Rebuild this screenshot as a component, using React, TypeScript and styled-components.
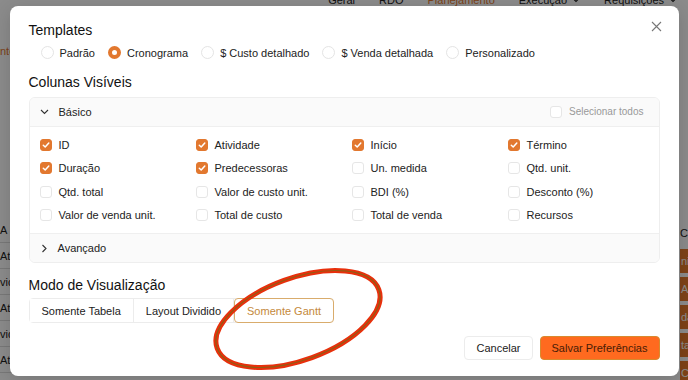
import { createGlobalStyle, styled } from 'styled-components'

const GlobalStyle = createGlobalStyle`
	html, body {
		margin: 0;
		padding: 0;
		background: #ffffff;
	}
	body {
		font-family: 'Liberation Sans', Arial, sans-serif;
		-webkit-font-smoothing: antialiased;
	}
	* {
		box-sizing: border-box;
	}
`

const ORANGE = '#e2782f'

const templates = [
	{ label: 'Padrão', checked: false },
	{ label: 'Cronograma', checked: true },
	{ label: '$ Custo detalhado', checked: false },
	{ label: '$ Venda detalhada', checked: false },
	{ label: 'Personalizado', checked: false },
]

const columns = [
	{ label: 'ID', checked: true },
	{ label: 'Atividade', checked: true },
	{ label: 'Início', checked: true },
	{ label: 'Término', checked: true },
	{ label: 'Duração', checked: true },
	{ label: 'Predecessoras', checked: true },
	{ label: 'Un. medida', checked: false },
	{ label: 'Qtd. unit.', checked: false },
	{ label: 'Qtd. total', checked: false },
	{ label: 'Valor de custo unit.', checked: false },
	{ label: 'BDI (%)', checked: false },
	{ label: 'Desconto (%)', checked: false },
	{ label: 'Valor de venda unit.', checked: false },
	{ label: 'Total de custo', checked: false },
	{ label: 'Total de venda', checked: false },
	{ label: 'Recursos', checked: false },
]

const modes = [
	{ label: 'Somente Tabela', active: false },
	{ label: 'Layout Dividido', active: false },
	{ label: 'Somente Gantt', active: true },
]

const navItems = [
	{ label: 'Geral', current: false, menu: false },
	{ label: 'RDO', current: false, menu: false },
	{ label: 'Planejamento', current: true, menu: false },
	{ label: 'Execução', current: false, menu: true },
	{ label: 'Requisições', current: false, menu: true },
]

const taskRows = ['A', 'Atividade', 'vidade', 'Atividade', 'vidade', 'Atividade']
const ganttRows = ['Cr', 'nicio', 'Ativ', 'dade', 'tarefa', 'Cron']

function Chevron({ dir }: { dir: 'down' | 'right' | 'small' }) {
	if (dir === 'right') {
		return (
			<svg width="8" height="9" viewBox="0 0 8 9" fill="none">
				<polyline points="2.5,1 6,4.5 2.5,8" stroke="#333" strokeWidth="1.1" />
			</svg>
		)
	}
	if (dir === 'small') {
		return (
			<svg width="8" height="6" viewBox="0 0 8 6" fill="none">
				<polyline points="1,1.5 4,4.5 7,1.5" stroke="#222" strokeWidth="1.1" />
			</svg>
		)
	}
	return (
		<svg width="9" height="8" viewBox="0 0 9 8" fill="none">
			<polyline points="1,2 4.5,5.5 8,2" stroke="#333" strokeWidth="1.1" />
		</svg>
	)
}

function Check({ checked }: { checked: boolean }) {
	return (
		<Box $checked={checked}>
			{checked && (
				<svg width="8" height="8" viewBox="0 0 8 8" fill="none">
					<polyline
						points="1.3,4.2 3.2,6 6.8,2"
						stroke="#fff"
						strokeWidth="1.5"
						strokeLinecap="round"
						strokeLinejoin="round"
					/>
				</svg>
			)}
		</Box>
	)
}

function App() {
	return (
		<Page>
			<GlobalStyle />
			<Nav>
				{navItems.map((item) => (
					<NavItem key={item.label} $current={item.current}>
						{item.label}
						{item.menu && <Chevron dir="small" />}
					</NavItem>
				))}
			</Nav>
			<Toolbar>
				<ToolbarTab>nte</ToolbarTab>
			</Toolbar>
			<Workspace>
				<TaskList>
					{taskRows.map((t, i) => (
						<TaskRow key={i}>{t}</TaskRow>
					))}
				</TaskList>
				<GanttList>
					{ganttRows.map((t, i) => (
						<GanttRow key={i}>
							{i > 0 ? <GanttBar>{t}</GanttBar> : <GanttHead>{t}</GanttHead>}
						</GanttRow>
					))}
				</GanttList>
			</Workspace>

			<Overlay>
				<Modal>
					<TitleRow>
						<Heading>Templates</Heading>
						<CloseButton aria-label="Fechar">
							<svg width="11" height="11" viewBox="0 0 11 11" fill="none">
								<path d="M1 1 L10 10 M10 1 L1 10" stroke="#777" strokeWidth="1.1" />
							</svg>
						</CloseButton>
					</TitleRow>
					<RadioRow>
						{templates.map((t) => (
							<RadioItem key={t.label}>
								<Radio $checked={t.checked} />
								{t.label}
							</RadioItem>
						))}
					</RadioRow>

					<SectionHeading>Colunas Visíveis</SectionHeading>
					<Accordion>
						<AccordionHeader>
							<HeaderLabel>
								<Chevron dir="down" />
								Básico
							</HeaderLabel>
							<SelectAll>
								<Check checked={false} />
								Selecionar todos
							</SelectAll>
						</AccordionHeader>
						<ColumnGrid>
							{columns.map((c) => (
								<ColumnItem key={c.label}>
									<Check checked={c.checked} />
									{c.label}
								</ColumnItem>
							))}
						</ColumnGrid>
						<AccordionFooter>
							<HeaderLabel>
								<Chevron dir="right" />
								Avançado
							</HeaderLabel>
						</AccordionFooter>
					</Accordion>

					<SectionHeading>Modo de Visualização</SectionHeading>
					<Segmented>
						{modes.map((m) => (
							<Segment key={m.label} $active={m.active}>
								{m.label}
							</Segment>
						))}
					</Segmented>

					<Footer>
						<SecondaryButton>Cancelar</SecondaryButton>
						<PrimaryButton>Salvar Preferências</PrimaryButton>
					</Footer>
				</Modal>
			</Overlay>

			<Annotation width="688" height="380" viewBox="0 0 688 380">
				<ellipse
					cx="298"
					cy="319"
					rx="86"
					ry="41"
					transform="rotate(-20 298 319)"
					fill="none"
					stroke="#e8300c"
					strokeWidth="5"
				/>
				<ellipse
					cx="298"
					cy="319"
					rx="86"
					ry="41"
					transform="rotate(-20 298 319)"
					fill="none"
					stroke="#8f5e14"
					strokeWidth="1.2"
				/>
			</Annotation>
		</Page>
	)
}

export default App

const Page = styled.div`
	position: relative;
	width: 688px;
	height: 380px;
	overflow: hidden;
	background: #ffffff;
`
const Nav = styled.nav`
	display: flex;
	justify-content: flex-end;
	align-items: center;
	gap: 24px;
	height: 14px;
	margin-top: -7px;
	padding-right: 11px;
`
const NavItem = styled.span<{ $current: boolean }>`
	display: flex;
	align-items: center;
	gap: 5px;
	font-size: 11px;
	line-height: 14px;
	color: ${(p) => (p.$current ? ORANGE : '#222')};
`
const Toolbar = styled.div`
	display: flex;
	height: 40px;
	align-items: flex-end;
	padding-bottom: 4px;
	margin-top: 14px;
`
const ToolbarTab = styled.span`
	font-size: 11px;
	color: ${ORANGE};
`
const Workspace = styled.div`
	display: flex;
	justify-content: space-between;
	margin-top: 156px;
`
const TaskList = styled.div`
	display: flex;
	flex-direction: column;
	width: 200px;
`
const TaskRow = styled.div`
	height: 26px;
	display: flex;
	align-items: center;
	font-size: 11px;
	color: #222;
	border-bottom: 1px solid #ddd;
`
const GanttList = styled.div`
	display: flex;
	flex-direction: column;
	width: 8px;
	padding-top: 2px;
`
const GanttRow = styled.div`
	height: 28px;
	display: flex;
	align-items: center;
`
const GanttHead = styled.span`
	font-size: 11px;
	color: #222;
`
const GanttBar = styled.div`
	width: 60px;
	height: 24px;
	display: flex;
	align-items: center;
	background: #e8792b;
	color: #fff;
	font-size: 11px;
	padding-left: 1px;
	flex-shrink: 0;
`
const Overlay = styled.div`
	position: absolute;
	inset: 0;
	display: flex;
	justify-content: center;
	align-items: flex-start;
	padding-top: 6px;
	background: rgba(0, 0, 0, 0.455);
`
const Modal = styled.div`
	width: 669px;
	height: 370px;
	display: flex;
	flex-direction: column;
	padding: 15px 19px 16px;
	background: #ffffff;
	border-radius: 8px;
	box-shadow: 0 4px 18px rgba(0, 0, 0, 0.15);
`
const TitleRow = styled.div`
	display: flex;
	justify-content: space-between;
	align-items: center;
`
const Heading = styled.h2`
	margin: 0;
	font-size: 14px;
	line-height: 18px;
	font-weight: 400;
	color: #111;
`
const SectionHeading = styled(Heading)`
	margin-top: 13px;
`
const CloseButton = styled.button`
	display: flex;
	align-items: center;
	justify-content: center;
	width: 14px;
	height: 14px;
	padding: 0;
	margin: -8px -4px 0 0;
	border: none;
	background: none;
	cursor: pointer;
`
const RadioRow = styled.div`
	display: flex;
	align-items: center;
	gap: 13px;
	height: 14px;
	margin-top: 7px;
	padding-left: 12px;
`
const RadioItem = styled.label`
	display: flex;
	align-items: center;
	gap: 6px;
	font-size: 11px;
	color: #222;
`
const Radio = styled.span<{ $checked: boolean }>`
	width: 13px;
	height: 13px;
	border-radius: 50%;
	background: #fff;
	border: ${(p) => (p.$checked ? `4px solid ${ORANGE}` : '1px solid #e4e4e4')};
`
const Accordion = styled.div`
	margin-top: 6px;
	border: 1px solid #eeeeee;
	border-radius: 6px;
	overflow: hidden;
`
const AccordionHeader = styled.div`
	height: 29px;
	display: flex;
	justify-content: space-between;
	align-items: center;
	padding: 0 15px 0 10px;
	background: #fafafa;
	border-bottom: 1px solid #efefef;
`
const AccordionFooter = styled(AccordionHeader)`
	height: 30px;
	border-bottom: none;
	border-top: 1px solid #efefef;
`
const HeaderLabel = styled.div`
	display: flex;
	align-items: center;
	gap: 10px;
	font-size: 11px;
	color: #222;
`
const SelectAll = styled.label`
	display: flex;
	align-items: center;
	gap: 7px;
	font-size: 10px;
	color: #999;
`
const ColumnGrid = styled.div`
	display: grid;
	grid-template-columns: repeat(4, 156px);
	grid-auto-rows: 23.5px;
	padding: 6px 0 6px 10px;
`
const ColumnItem = styled.label`
	display: flex;
	align-items: center;
	gap: 7px;
	font-size: 11px;
	color: #222;
`
const Box = styled.span<{ $checked: boolean }>`
	width: 12px;
	height: 12px;
	display: flex;
	align-items: center;
	justify-content: center;
	border-radius: 3px;
	background: ${(p) => (p.$checked ? ORANGE : '#fff')};
	border: 1px solid ${(p) => (p.$checked ? ORANGE : '#e6e6e6')};
`
const Segmented = styled.div`
	display: inline-flex;
	align-self: flex-start;
	height: 25px;
	margin-top: 4px;
	border: 1px solid #ececec;
	border-radius: 4px;
`
const Segment = styled.button<{ $active: boolean }>`
	padding: 0 12px;
	font-family: inherit;
	font-size: 11px;
	background: #fff;
	cursor: pointer;
	color: ${(p) => (p.$active ? '#c4893b' : '#222')};
	border: ${(p) => (p.$active ? '1px solid #d9ac6c' : 'none')};
	border-right: 1px solid ${(p) => (p.$active ? '#d9ac6c' : '#ececec')};
	border-radius: ${(p) => (p.$active ? '4px' : '0')};
	margin: ${(p) => (p.$active ? '-1px -1px -1px 0' : '0')};
	&:last-child {
		border-right: ${(p) => (p.$active ? '1px solid #d9ac6c' : 'none')};
	}
`
const Footer = styled.div`
	display: flex;
	justify-content: flex-end;
	gap: 7px;
	margin-top: 13px;
`
const SecondaryButton = styled.button`
	height: 24px;
	padding: 0 11px;
	font-family: inherit;
	font-size: 11px;
	color: #222;
	background: #fff;
	border: 1px solid #ececec;
	border-radius: 4px;
	cursor: pointer;
`
const PrimaryButton = styled(SecondaryButton)`
	color: #4a1c06;
	background: #ff6a1f;
	border-color: #d88a2e;
`
const Annotation = styled.svg`
	position: absolute;
	inset: 0;
	pointer-events: none;
`
